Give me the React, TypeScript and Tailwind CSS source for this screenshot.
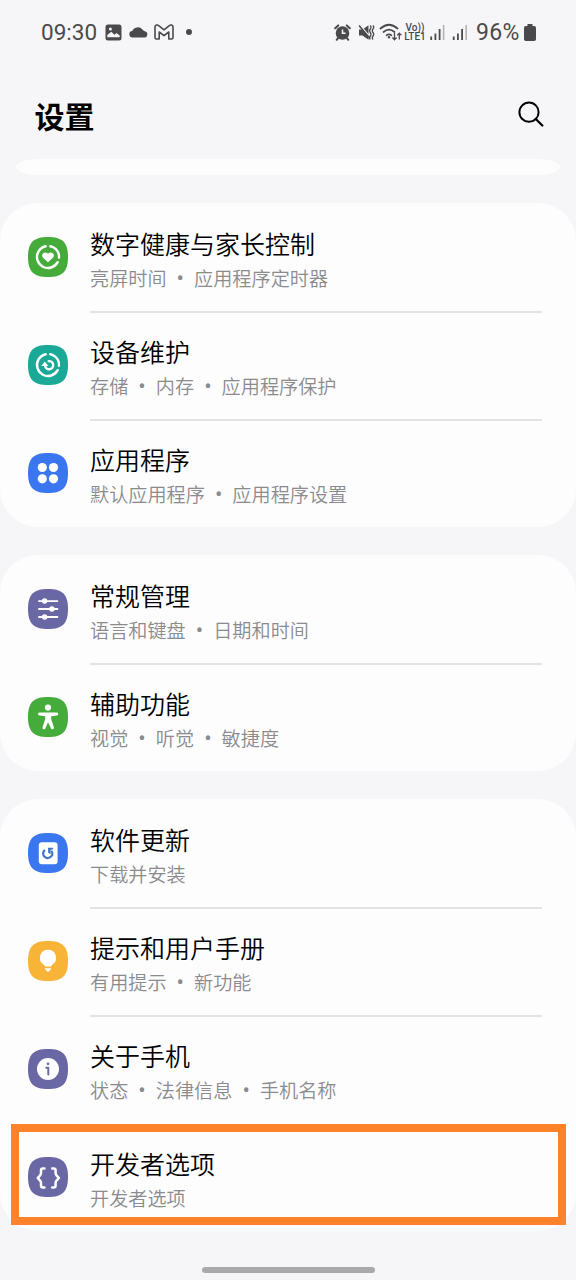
import type { ReactNode } from "react";

type Item = {
    title: string;
    details: string[];
    color: string;
    icon: ReactNode;
    divider?: boolean;
    highlighted?: boolean;
};

// Broken ring shared by the wellbeing and device care icons
function Ring() {
    return (
        <circle
            cx="20"
            cy="20"
            r="11"
            fill="none"
            stroke="#fff"
            strokeWidth="2.4"
            strokeLinecap="round"
            pathLength="360"
            strokeDasharray="230 24 82 24"
            transform="rotate(28 20 20)"
        />
    );
}

const groups: Item[][] = [
    [
        {
            title: "数字健康与家长控制",
            details: ["亮屏时间", "应用程序定时器"],
            color: "#45ab3b",
            divider: true,
            icon: (
                <>
                    <Ring />
                    <path
                        d="M20 25.2l-4.9-4.5c-2.8-3 .9-7 4.3-4.5l.6.6.6-.6c3.4-2.5 7.1 1.5 4.3 4.5z"
                        fill="#fff"
                    />
                </>
            ),
        },
        {
            title: "设备维护",
            details: ["存储", "内存", "应用程序保护"],
            color: "#1ba997",
            divider: true,
            icon: (
                <>
                    <Ring />
                    <path
                        d="M20.6 16.1A4.1 4.1 0 1 1 17 20.6"
                        fill="none"
                        stroke="#fff"
                        strokeWidth="2.3"
                        strokeLinecap="round"
                    />
                    <path d="M13.2 20.9l3.6-4.3 3.6 4.3z" fill="#fff" />
                </>
            ),
        },
        {
            title: "应用程序",
            details: ["默认应用程序", "应用程序设置"],
            color: "#3a76ef",
            icon: (
                <g fill="#fff">
                    <circle cx="14.3" cy="14.5" r="4.6" />
                    <circle cx="25.5" cy="14.5" r="4.6" />
                    <circle cx="14.3" cy="25.8" r="4.6" />
                    <circle cx="25.5" cy="25.8" r="4.6" />
                </g>
            ),
        },
    ],
    [
        {
            title: "常规管理",
            details: ["语言和键盘", "日期和时间"],
            color: "#6968a4",
            divider: true,
            icon: (
                <g fill="#fff" stroke="#fff" strokeWidth="1.9" strokeLinecap="round">
                    <path d="M11 12.1h18.4M11 20h18.4M11 28h18.4" />
                    <circle cx="16.6" cy="12.1" r="1.8" />
                    <circle cx="23.9" cy="20" r="1.8" />
                    <circle cx="16.6" cy="28" r="1.8" />
                </g>
            ),
        },
        {
            title: "辅助功能",
            details: ["视觉", "听觉", "敏捷度"],
            color: "#45ab3b",
            icon: (
                <g fill="#fff">
                    <circle cx="20" cy="10.6" r="3.1" />
                    <path d="M11.4 15.4h17.2a1.5 1.5 0 0 1 .2 3l-5.6.9v2.8l2.7 8.4a1.5 1.5 0 0 1-2.8 1L20 25.2l-2.7 6.3a1.5 1.5 0 0 1-2.8-1l2.7-8.4v-2.8l-5.6-.9a1.5 1.5 0 0 1-.2-3z" />
                </g>
            ),
        },
    ],
    [
        {
            title: "软件更新",
            details: ["下载并安装"],
            color: "#3a76ef",
            divider: true,
            icon: (
                <>
                    <rect x="10.8" y="9.2" width="18.8" height="22" rx="3" fill="#fff" />
                    <path
                        d="M16.4 17.5A4.5 4.5 0 1 0 23.8 18.5"
                        fill="none"
                        stroke="#3f72c9"
                        strokeWidth="2.1"
                        strokeLinecap="round"
                    />
                    <path d="M20 14.8h5.1l-.3 1.6-2.2.3v4.5l-2.4-1.5z" fill="#3f72c9" />
                </>
            ),
        },
        {
            title: "提示和用户手册",
            details: ["有用提示", "新功能"],
            color: "#f8b437",
            divider: true,
            icon: (
                <g fill="#fff">
                    <path d="M20 8.7a8 8 0 0 0-4.3 14.8c.7.5 1.1 1.2 1.1 2h6.4c0-.8.4-1.5 1.1-2A8 8 0 0 0 20 8.7z" />
                    <path d="M16.8 27.3h6.4c0 1.7-1.8 2.3-3.2 3.9-1.4-1.6-3.2-2.2-3.2-3.9z" />
                </g>
            ),
        },
        {
            title: "关于手机",
            details: ["状态", "法律信息", "手机名称"],
            color: "#6968a4",
            icon: (
                <>
                    <circle cx="20" cy="20" r="11" fill="#fff" />
                    <circle cx="20" cy="14.8" r="1.4" fill="#6968a4" />
                    <path
                        d="M18.3 18.8h2v6.8"
                        fill="none"
                        stroke="#6968a4"
                        strokeWidth="2"
                        strokeLinecap="round"
                        strokeLinejoin="round"
                    />
                </>
            ),
        },
        {
            title: "开发者选项",
            details: ["开发者选项"],
            color: "#6968a4",
            highlighted: true,
            icon: (
                <path
                    d="M16.4 11.5h-1.4c-1.3 0-2 .7-2 2v2.6c0 .9-.3 1.5-.9 2.3L9.700 21l2.400 2.600c.6.8.9 1.400.9 2.300v2.600c0 1.300.7 2 2 2h1.400M24.200 11.500h1.400c1.300 0 2 .7 2 2v2.600c0 .9.3 1.500.9 2.300l2.400 2.600-2.400 2.600c-.6.8-.9 1.400-.9 2.300v2.600c0 1.300-.7 2-2 2h-1.400"
                    fill="none"
                    stroke="#fff"
                    strokeWidth="2.5"
                    strokeLinecap="round"
                    strokeLinejoin="round"
                />
            ),
        },
    ],
];

function StatusBar() {
    return (
        <div className="flex h-16 items-center justify-between pr-10 pl-[41px] font-['Roboto',sans-serif] text-[#4a4a4d]">
            <div className="flex items-center">
                <span className="w-16 text-[22.5px] leading-none">09:30</span>
                <svg width="17" height="17" viewBox="0 0 17 17">
                    <rect x=".5" y=".5" width="16" height="16" rx="2.5" fill="currentColor" />
                    <path d="M2.3 13.2V11l4-3.3 3.2 3 2-1.7 3.2 2.6v1.6z" fill="#f6f6f8" />
                    <circle cx="5.4" cy="5" r="1.5" fill="#f6f6f8" />
                </svg>
                <svg className="ml-[7px]" width="19" height="12" viewBox="0 0 19 12">
                    <path
                        d="M3.8 11.5A3.2 3.2 0 0 1 3.3 5.1A5.7 5.2 0 0 1 13.5 3.6Q14 5 15.8 5.2A3.2 3.2 0 0 1 15.6 11.5z"
                        fill="currentColor"
                    />
                </svg>
                <svg className="ml-1.5" width="20" height="16" viewBox="0 0 20 16">
                    <path
                        d="M1 3.2v10.3q0 1.5 1.5 1.5h2.7V8l4.8 3.7L14.8 8v7h2.7q1.5 0 1.5-1.5V3.2C19 .9 16.7.4 15.3 1.6L10 5.8 4.7 1.6C3.3.4 1 .9 1 3.2z"
                        fill="none"
                        stroke="currentColor"
                        strokeWidth="1.6"
                        strokeLinejoin="round"
                    />
                </svg>
                <span className="ml-3 size-[6px] rounded-full bg-[#4a4a4d]" />
            </div>

            <div className="flex items-center">
                <svg width="17" height="17" viewBox="0 0 17 17">
                    <circle cx="8.5" cy="9" r="6.8" fill="currentColor" />
                    <path
                        d="M1.2 4.2L4.2 1.4M15.8 4.2l-3-2.8M4.2 13.8l-1.5 2M12.8 13.8l1.5 2"
                        stroke="currentColor"
                        strokeWidth="2"
                        strokeLinecap="round"
                    />
                    <path d="M8.5 5.4V9.3H11.5" fill="none" stroke="#f6f6f8" strokeWidth="1.5" />
                </svg>
                <svg className="ml-[7px]" width="17" height="17" viewBox="0 0 17 17">
                    <path d="M1 5.5h3.5L10.5 1.2v14.6L4.5 11.5H1z" fill="currentColor" />
                    <path d="M1.5 .5l11 13" stroke="#f6f6f8" strokeWidth="1.2" />
                    <path d="M1 1.5l11 13" stroke="currentColor" strokeWidth="1.5" />
                    <path
                        d="M12.3 1.5q1.4 1.7 0 3.5t0 3.5 0 3.5 0 3.5M15 1.5q1.4 1.7 0 3.5t0 3.5 0 3.5 0 3.5"
                        fill="none"
                        stroke="currentColor"
                        strokeWidth="1.3"
                    />
                </svg>
                <svg className="ml-1" width="23" height="18" viewBox="0 0 23 18">
                    <g fill="none" stroke="currentColor" strokeWidth="1.7" strokeLinecap="round">
                        <path d="M1.5 5.5Q10 -2 18.5 5.5" />
                        <path d="M4.5 9Q10 4.3 15.5 9" />
                        <path d="M7.5 12.3Q10 10.3 12.5 12.3" />
                    </g>
                    <circle cx="10" cy="14.3" r="1.2" fill="currentColor" />
                    <path
                        d="M15.5 10v6.5M13.4 14.5l2.1 2.2 2.1-2.2M20.3 16.5V10.4M18.2 12.4l2.1-2.2 2.1 2.2"
                        fill="none"
                        stroke="currentColor"
                        strokeWidth="1.3"
                    />
                </svg>
                <div className="ml-0.5 flex w-[22px] flex-col items-center text-[10px] leading-[9px] font-medium whitespace-nowrap">
                    <span>Vo))</span>
                    <span>LTE1</span>
                </div>
                <svg className="ml-1" width="38" height="16" viewBox="0 0 38 16">
                    <path
                        d="M1.2 12.5V16M5.4 9.5V16M9.6 5V16M23.7 12.5V16M27.9 9.5V16M32.1 5V16"
                        stroke="currentColor"
                        strokeWidth="1.8"
                    />
                    <path d="M13.6 1V16M36.2 1V16" stroke="#b3b3b6" strokeWidth="1.6" />
                </svg>
                <span className="ml-2 w-[48px] text-[23px] leading-none tracking-[0.3px]">96%</span>
                <svg width="12" height="17" viewBox="0 0 12 17">
                    <path
                        d="M3.5 0h5v2h1.7q1.8 0 1.8 1.8v11.4q0 1.8-1.8 1.8H1.8Q0 17 0 15.2V3.8Q0 2 1.8 2h1.7z"
                        fill="currentColor"
                    />
                </svg>
            </div>
        </div>
    );
}

function Row({ item }: { item: Item }) {
    return (
        <li className="relative flex h-[108px] items-start pl-7">
            <svg className="mt-[34px] shrink-0" width="40" height="40" viewBox="0 0 40 40">
                <path
                    d="M20 0C34.5 0 40 5.5 40 20S34.5 40 20 40 0 34.5 0 20 5.5 0 20 0z"
                    fill={item.color}
                />
                {item.icon}
            </svg>
            <div
                className={`ml-[22px] mr-[34px] h-[110px] flex-1 pt-[22px] ${
                    item.divider ? "border-b-2 border-[#e3e3e5]" : ""
                }`}
            >
                <h2 className="text-[25px] leading-9 font-[350] text-black">{item.title}</h2>
                <p className="flex text-[19.15px] leading-[35px] font-[350] text-[#8b8b8e]">
                    {item.details.map((detail, i) => (
                        <span key={detail} className="flex">
                            {i > 0 && (
                                <span className="w-[27.5px] text-center font-['Roboto',sans-serif] text-[22px] font-normal">
                                    •
                                </span>
                            )}
                            {detail}
                        </span>
                    ))}
                </p>
            </div>
            {item.highlighted && (
                <div className="absolute top-px right-2.5 bottom-1.5 left-[11px] border-8 border-[#fd8229]" />
            )}
        </li>
    );
}

export default function App() {
    return (
        <div className="flex h-[1280px] w-[576px] flex-col overflow-hidden bg-[#f6f6f8] font-['Noto_Sans_CJK_SC',sans-serif]">
            <StatusBar />

            <header className="flex h-[95px] items-start justify-between pt-[31px] pr-8 pl-[34.5px]">
                <h1 className="text-[30px] leading-10 font-bold text-black">设置</h1>
                <svg className="mt-[5px]" width="27" height="27" viewBox="0 0 27 27">
                    <circle cx="12" cy="12.2" r="9.6" fill="none" stroke="#000" strokeWidth="2" />
                    <path d="M18.8 19L25.3 25.5" stroke="#000" strokeWidth="2.3" strokeLinecap="round" />
                </svg>
            </header>

            <main className="flex flex-col">
                {/* Tail of the group scrolled under the header */}
                <div className="mx-4 h-4 rounded-[24px/8px] bg-[#fdfdfe]" />

                <div className="mt-7 flex flex-col gap-7">
                    {groups.map((group, i) => (
                        <ul key={i} className="rounded-[38px] bg-[#fdfdfe]">
                            {group.map((item) => (
                                <Row key={item.title} item={item} />
                            ))}
                        </ul>
                    ))}
                </div>
            </main>

            <div className="mx-auto mt-auto mb-[7px] h-[6px] w-[173px] rounded-full bg-[#a9a9ab]" />
        </div>
    );
}
